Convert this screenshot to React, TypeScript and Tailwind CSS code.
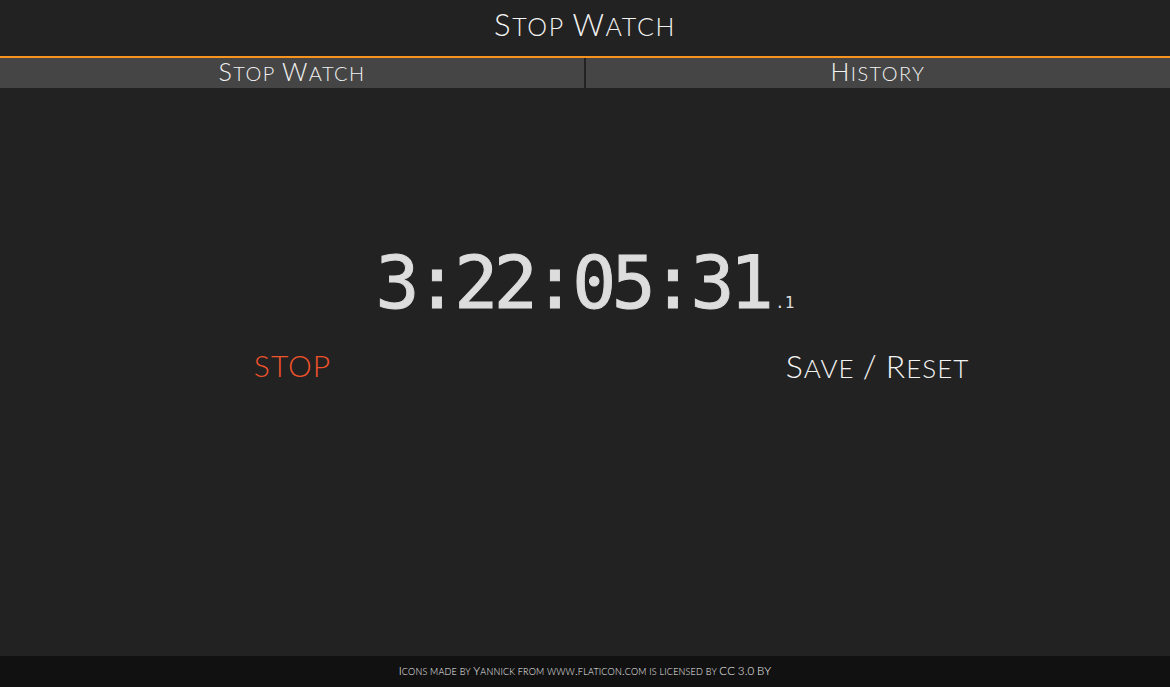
import React from "react";

function SC({ text, big, small }: { text: string; big: string; small: string }) {
  const words = text.split(" ");
  return (
    <span className="whitespace-pre">
      {words.map((w, i) => (
        <React.Fragment key={i}>
          {i > 0 ? <span className={small}> </span> : null}
          {w.split("").map((ch, j) => {
            const isUpper = ch !== ch.toLowerCase();
            return (
              <span key={j} className={isUpper || !/[a-z]/i.test(ch) ? big : small}>
                {ch.toUpperCase()}
              </span>
            );
          })}
        </React.Fragment>
      ))}
    </span>
  );
}

export default function App() {
  const font = "font-['Lato','Open_Sans',sans-serif] font-light";
  return (
    <div className={`flex h-[687px] w-[1170px] flex-col bg-[#222222] text-[#f2f2f2] ${font}`}>
      <header className="flex h-[58px] items-center justify-center border-b-2 border-[#f7941d] pb-[8px]">
        <h1 className="tracking-[1.6px] leading-none">
          <SC text="Stop Watch" big="text-[31px]" small="text-[25px]" />
        </h1>
      </header>
      <nav className="grid h-[30px] grid-cols-2 gap-[2px] bg-[#222222]">
        <div className="flex items-center justify-center bg-[#454545] pb-[4px] leading-none tracking-[1.4px]">
          <SC text="Stop Watch" big="text-[25px]" small="text-[20px]" />
        </div>
        <div className="flex items-center justify-center bg-[#454545] pb-[4px] leading-none tracking-[1.4px]">
          <SC text="History" big="text-[25px]" small="text-[20px]" />
        </div>
      </nav>
      <main className="flex flex-1 flex-col">
        <div className="mt-[158px] flex justify-center">
          <div className="flex items-baseline font-['DejaVu_Sans_Mono',monospace] text-[#dddddd]">
            <span className="text-[73px] leading-none tracking-[-4.6px] [-webkit-text-stroke:1px_#dddddd]">3:22:05:31</span>
            <span className="ml-[6px] text-[16px] leading-none">.1</span>
          </div>
        </div>
        <div className="mt-[31px] grid grid-cols-2">
          <div className="flex justify-center text-[#f0522a] leading-none tracking-[1px]">
            <SC text="STOP" big="text-[30px]" small="text-[30px]" />
          </div>
          <div className="flex justify-center leading-none tracking-[1px]">
            <SC text="Save / Reset" big="text-[32px]" small="text-[26px]" />
          </div>
        </div>
      </main>
      <footer className="flex h-[31px] items-center justify-center bg-[#111111] pb-[5px] leading-none tracking-[0.2px]">
        <SC
          text="Icons made by Yannick from www.flaticon.com is licensed by CC 3.0 BY"
          big="text-[11.5px]"
          small="text-[9px]"
        />
      </footer>
    </div>
  );
}
